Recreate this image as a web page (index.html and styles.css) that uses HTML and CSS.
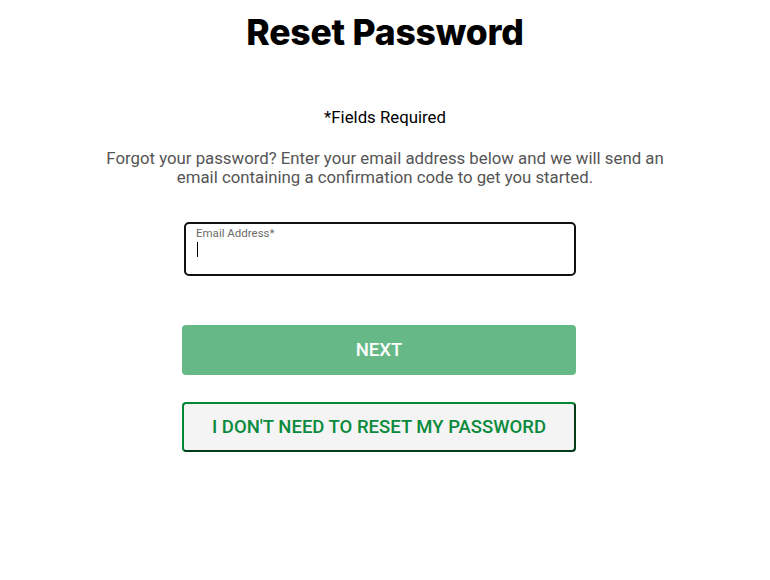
FILE: index.html
```html
<!DOCTYPE html>
<html>

<head>
  <meta charset="utf-8">
  <title>Reset Password</title>
  <link rel="stylesheet" href="styles.css">
</head>

<body>
  <div class="reset">
    <h1>Reset Password</h1>
    <p class="required">*Fields Required</p>
    <p class="intro">Forgot your password? Enter your email address below and we will send an<br>email containing a confirmation code to get you started.</p>

    <div class="form">
      <div class="field">
        <label for="email">Email Address*</label>
        <span class="caret"></span>
        <input type="text" id="email">
      </div>

      <button type="button" class="btn btn-next">NEXT</button>
      <button type="button" class="btn btn-cancel">I DON'T NEED TO RESET MY PASSWORD</button>
    </div>
  </div>
</body>

</html>
```

FILE: styles.css
```css
body {
  margin: 0;
  font-family: Roboto, "Liberation Sans", sans-serif;
  background: #fff;
}

.reset {
  display: flex;
  flex-direction: column;
  align-items: center;
}

h1 {
  margin: 12px 0 0 0;
  font-family: Inter, "Liberation Sans", sans-serif;
  font-weight: 800;
  font-size: 35.5px;
  letter-spacing: -0.2px;
  line-height: 42px;
  color: #000;
}

.required {
  margin: 53px 0 0 0;
  font-size: 16.8px;
  line-height: 20px;
  color: #000;
}

.intro {
  margin: 22px 0 0 0;
  font-size: 16.8px;
  line-height: 18.5px;
  color: #555;
  text-align: center;
}

.form {
  display: flex;
  flex-direction: column;
  align-items: flex-start;
  margin: -1px 12px 0 0;
}

.field {
  position: relative;
  box-sizing: border-box;
  width: 392px;
  height: 54px;
  margin: 37px 0 0 2px;
  border: 2px solid #111;
  border-radius: 5px;
}

.field label {
  position: absolute;
  left: 10px;
  top: 2px;
  font-size: 11.5px;
  color: #6b6b6b;
}

.field input {
  box-sizing: border-box;
  width: 100%;
  height: 100%;
  border: none;
  background: transparent;
  outline: none;
}

.caret {
  position: absolute;
  left: 11px;
  top: 18px;
  width: 1px;
  height: 15px;
  background: #000;
}

.btn {
  box-sizing: border-box;
  width: 394px;
  height: 50px;
  font-family: Roboto, "Liberation Sans", sans-serif;
  font-size: 18.5px;
  font-weight: 500;
  border-radius: 4px;
}

.btn-next {
  margin-top: 49px;
  border: none;
  background: #66b987;
  color: #fff;
}

.btn-cancel {
  margin-top: 27px;
  background: #f4f4f4;
  color: #0a8a3c;
  border: 2px solid;
  border-color: #008837 #003d18 #003d18 #008837;
}
```
